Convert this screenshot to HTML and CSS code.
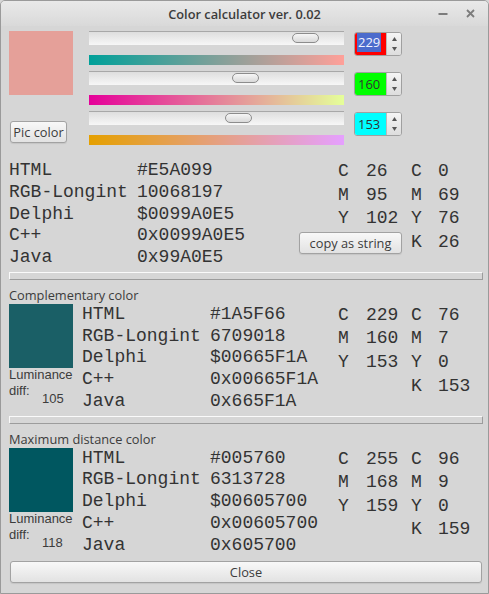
FILE: index.html
```html
<!DOCTYPE html>
<html>
<head>
<meta charset="utf-8">
<title>Color calculator ver. 0.02</title>
<link rel="stylesheet" href="styles.css">
</head>
<body>
<div class="window">
  <div class="titlebar">
    <span></span>
    <span class="title">Color calculator ver. 0.02</span>
    <span class="controls">
      <svg class="ic-min" width="10" height="10" viewBox="0 0 10 10"><rect x="0.5" y="4" width="9" height="2" fill="#7c7c7c"/></svg>
      <svg class="ic-close" width="9" height="9" viewBox="0 0 9 9"><path d="M1 1L8 8M8 1L1 8" stroke="#7c7c7c" stroke-width="1.8" fill="none"/></svg>
    </span>
  </div>
  <div class="content">
    <div class="top">
      <div class="leftcol">
        <div class="swatch sw-main"></div>
        <button class="btn pic">Pic color</button>
      </div>
      <div class="sliders">
        <div class="slider">
          <div class="track"><div class="thumb" style="left:203px"></div></div>
          <div class="grad grad-r"></div>
        </div>
        <div class="slider">
          <div class="track"><div class="thumb" style="left:143px"></div></div>
          <div class="grad grad-g"></div>
        </div>
        <div class="slider">
          <div class="track"><div class="thumb" style="left:136px"></div></div>
          <div class="grad grad-b"></div>
        </div>
      </div>
      <div class="spins">
        <div class="spin">
          <div class="field f-red"><span class="sel">229</span></div>
          <div class="arrows">
            <svg width="5" height="4" viewBox="0 0 5 4"><polygon points="2.5,0 5,4 0,4" fill="#555"/></svg>
            <svg width="5" height="4" viewBox="0 0 5 4"><polygon points="0,0 5,0 2.5,4" fill="#555"/></svg>
          </div>
        </div>
        <div class="spin">
          <div class="field f-green"><span class="num">160</span></div>
          <div class="arrows">
            <svg width="5" height="4" viewBox="0 0 5 4"><polygon points="2.5,0 5,4 0,4" fill="#555"/></svg>
            <svg width="5" height="4" viewBox="0 0 5 4"><polygon points="0,0 5,0 2.5,4" fill="#555"/></svg>
          </div>
        </div>
        <div class="spin">
          <div class="field f-cyan"><span class="num">153</span></div>
          <div class="arrows">
            <svg width="5" height="4" viewBox="0 0 5 4"><polygon points="2.5,0 5,4 0,4" fill="#555"/></svg>
            <svg width="5" height="4" viewBox="0 0 5 4"><polygon points="0,0 5,0 2.5,4" fill="#555"/></svg>
          </div>
        </div>
      </div>
    </div>

    <div class="info">
      <div class="codes mono">
        <span>HTML</span><span>#E5A099</span>
        <span>RGB-Longint</span><span>10068197</span>
        <span>Delphi</span><span>$0099A0E5</span>
        <span>C++</span><span>0x0099A0E5</span>
        <span>Java</span><span>0x99A0E5</span>
      </div>
      <div class="cmyk mono">
        <span class="c1">C</span><span>26</span><span>C</span><span>0</span>
        <span class="c1">M</span><span>95</span><span>M</span><span>69</span>
        <span class="c1">Y</span><span>102</span><span>Y</span><span>76</span>
        <button class="btn copy">copy as string</button><span class="c3">K</span><span>26</span>
      </div>
    </div>

    <div class="sep"></div>

    <div class="section">
      <div class="caption">Complementary color</div>
      <div class="secbody">
        <div class="swcol">
          <div class="swatch sw-comp"></div>
          <div class="lum">
            <span class="lumlabel">Luminance<br>diff:</span>
            <span class="lumval">105</span>
          </div>
        </div>
        <div class="codes mono">
          <span>HTML</span><span>#1A5F66</span>
          <span>RGB-Longint</span><span>6709018</span>
          <span>Delphi</span><span>$00665F1A</span>
          <span>C++</span><span>0x00665F1A</span>
          <span>Java</span><span>0x665F1A</span>
        </div>
        <div class="cmyk mono">
          <span class="c1">C</span><span>229</span><span>C</span><span>76</span>
          <span class="c1">M</span><span>160</span><span>M</span><span>7</span>
          <span class="c1">Y</span><span>153</span><span>Y</span><span>0</span>
          <span class="c3">K</span><span>153</span>
        </div>
      </div>
    </div>

    <div class="sep"></div>

    <div class="section">
      <div class="caption">Maximum distance color</div>
      <div class="secbody">
        <div class="swcol">
          <div class="swatch sw-max"></div>
          <div class="lum">
            <span class="lumlabel">Luminance<br>diff:</span>
            <span class="lumval">118</span>
          </div>
        </div>
        <div class="codes mono">
          <span>HTML</span><span>#005760</span>
          <span>RGB-Longint</span><span>6313728</span>
          <span>Delphi</span><span>$00605700</span>
          <span>C++</span><span>0x00605700</span>
          <span>Java</span><span>0x605700</span>
        </div>
        <div class="cmyk mono">
          <span class="c1">C</span><span>255</span><span>C</span><span>96</span>
          <span class="c1">M</span><span>168</span><span>M</span><span>9</span>
          <span class="c1">Y</span><span>159</span><span>Y</span><span>0</span>
          <span class="c3">K</span><span>159</span>
        </div>
      </div>
    </div>

    <button class="btn closebtn">Close</button>
  </div>
</div>
</body>
</html>
```

FILE: styles.css
```css
* { box-sizing: border-box; }
html, body { margin: 0; padding: 0; }
body {
  width: 489px;
  height: 594px;
  overflow: hidden;
  background: #d6d6d6;
  font-family: "Open Sans", "DejaVu Sans", sans-serif;
  color: #3c3c3c;
}

.window {
  width: 489px;
  height: 594px;
  border: 1px solid #9a9a9a;
  border-radius: 5px 5px 0 0;
  background: #d6d6d6;
  display: flex;
  flex-direction: column;
  overflow: hidden;
}

.titlebar {
  height: 25px;
  display: grid;
  grid-template-columns: 1fr auto 1fr;
  align-items: center;
  background: linear-gradient(#e9e9e9, #d9d9d9);
}
.title {
  font-weight: 600;
  font-size: 12.8px;
  color: #3c3c3c;
}
.controls {
  justify-self: end;
  display: flex;
  align-items: center;
  gap: 18px;
  padding-right: 13px;
}
.controls svg { display: block; }

.content {
  flex: 1;
  display: flex;
  flex-direction: column;
  padding: 5px 5px 0 8px;
}

/* top area */
.top { display: flex; align-items: flex-start; }
.leftcol { width: 64px; display: flex; flex-direction: column; }
.swatch { width: 64px; height: 64px; }
.sw-main { background: #E5A099; }
.sw-comp { background: #1A5F66; }
.sw-max { background: #005760; }

.btn {
  font-family: "Open Sans", "DejaVu Sans", sans-serif;
  font-size: 12.8px;
  color: #3c3c3c;
  height: 22px;
  line-height: 20px;
  padding: 0;
  border: 1px solid #a2a2a2;
  border-radius: 3px;
  background: linear-gradient(#f8f8f8, #e2e2e2);
  box-shadow: 0 1px 1px rgba(0, 0, 0, 0.08);
}
.pic { margin: 26px 0 0 1px; width: 57px; }

.sliders {
  margin-left: 16px;
  width: 255px;
  display: flex;
  flex-direction: column;
  gap: 6px;
}
.track {
  position: relative;
  height: 14px;
  border-top: 1px solid #a8a8a8;
  background: linear-gradient(#dedede, #f7f7f7);
}
.thumb {
  position: absolute;
  top: 1px;
  width: 27px;
  height: 10px;
  border: 1px solid #8c8c8c;
  border-radius: 5px;
  background: linear-gradient(#f6f6f6, #d9d9d9);
}
.grad { height: 10px; margin-top: 10px; }
.grad-r { background: linear-gradient(to right, #00A099, #FFA099); }
.grad-g { background: linear-gradient(to right, #E50099, #E5FF99); }
.grad-b { background: linear-gradient(to right, #E5A000, #E5A0FF); }

.spins {
  margin-left: 10px;
  margin-top: 1px;
  display: flex;
  flex-direction: column;
  gap: 16px;
}
.spin {
  width: 48px;
  height: 24px;
  border: 1px solid #a0a0a0;
  border-radius: 3px;
  display: flex;
  overflow: hidden;
  background: #eeeeee;
}
.field {
  flex: 1;
  display: flex;
  align-items: center;
  padding-left: 3px;
  font-size: 13px;
  color: #333;
}
.f-red { background: #ff0000; }
.f-green { background: #00ff00; }
.f-cyan { background: #00ffff; }
.sel {
  background: #4c6bcc;
  color: #f2f2ff;
  line-height: 19px;
  padding: 0 1px;
  margin-left: -1px;
  margin-top: -3px;
}
.num { line-height: 19px; }
.arrows {
  width: 15px;
  border-left: 1px solid #b9b9b9;
  background: linear-gradient(#f5f5f5, #dddddd);
  display: flex;
  flex-direction: column;
  align-items: center;
  justify-content: center;
  gap: 6px;
}
.arrows svg { display: block; }

/* info */
.mono {
  font-family: "Liberation Mono", "DejaVu Sans Mono", monospace;
  font-size: 18px;
  color: #333;
}
.info { display: flex; margin-top: 15px; }
.codes {
  flex: none;
  display: grid;
  grid-template-columns: 128px auto;
  grid-auto-rows: 21.75px;
  line-height: 21.75px;
  white-space: nowrap;
}
.cmyk {
  flex: none;
  margin-left: auto;
  width: 145px;
  display: grid;
  grid-template-columns: 28px 45px 27px 1fr;
  grid-auto-rows: 23.6px;
  line-height: 23.6px;
  white-space: nowrap;
}
.c1 { grid-column: 1; }
.c3 { grid-column: 3; }
.copy {
  grid-column: 1 / 3;
  justify-self: start;
  align-self: end;
  width: 103px;
  margin-left: -39px;
}

.sep {
  height: 8px;
  margin-top: 3px;
  border: 1px solid;
  border-color: #fafafa #9c9c9c #9c9c9c #fafafa;
}

.caption {
  font-size: 12.8px;
  line-height: 17px;
  margin-top: 7px;
}
.secbody { display: flex; align-items: flex-start; }
.swcol { flex: none; width: 64px; }
.secbody .codes { margin-left: 9px; }
.lum {
  display: grid;
  grid-template-columns: 33px auto;
  font-family: "Liberation Sans", "Open Sans", sans-serif;
  font-size: 13px;
  line-height: 16px;
}
.lumlabel {
  grid-area: 1 / 1 / 2 / 3;
  margin-top: -1px;
  white-space: nowrap;
}
.lumval {
  grid-area: 1 / 2 / 2 / 3;
  margin-top: 23px;
  justify-self: start;
}

.closebtn { margin: 5px 1px 0 1px; }
```
